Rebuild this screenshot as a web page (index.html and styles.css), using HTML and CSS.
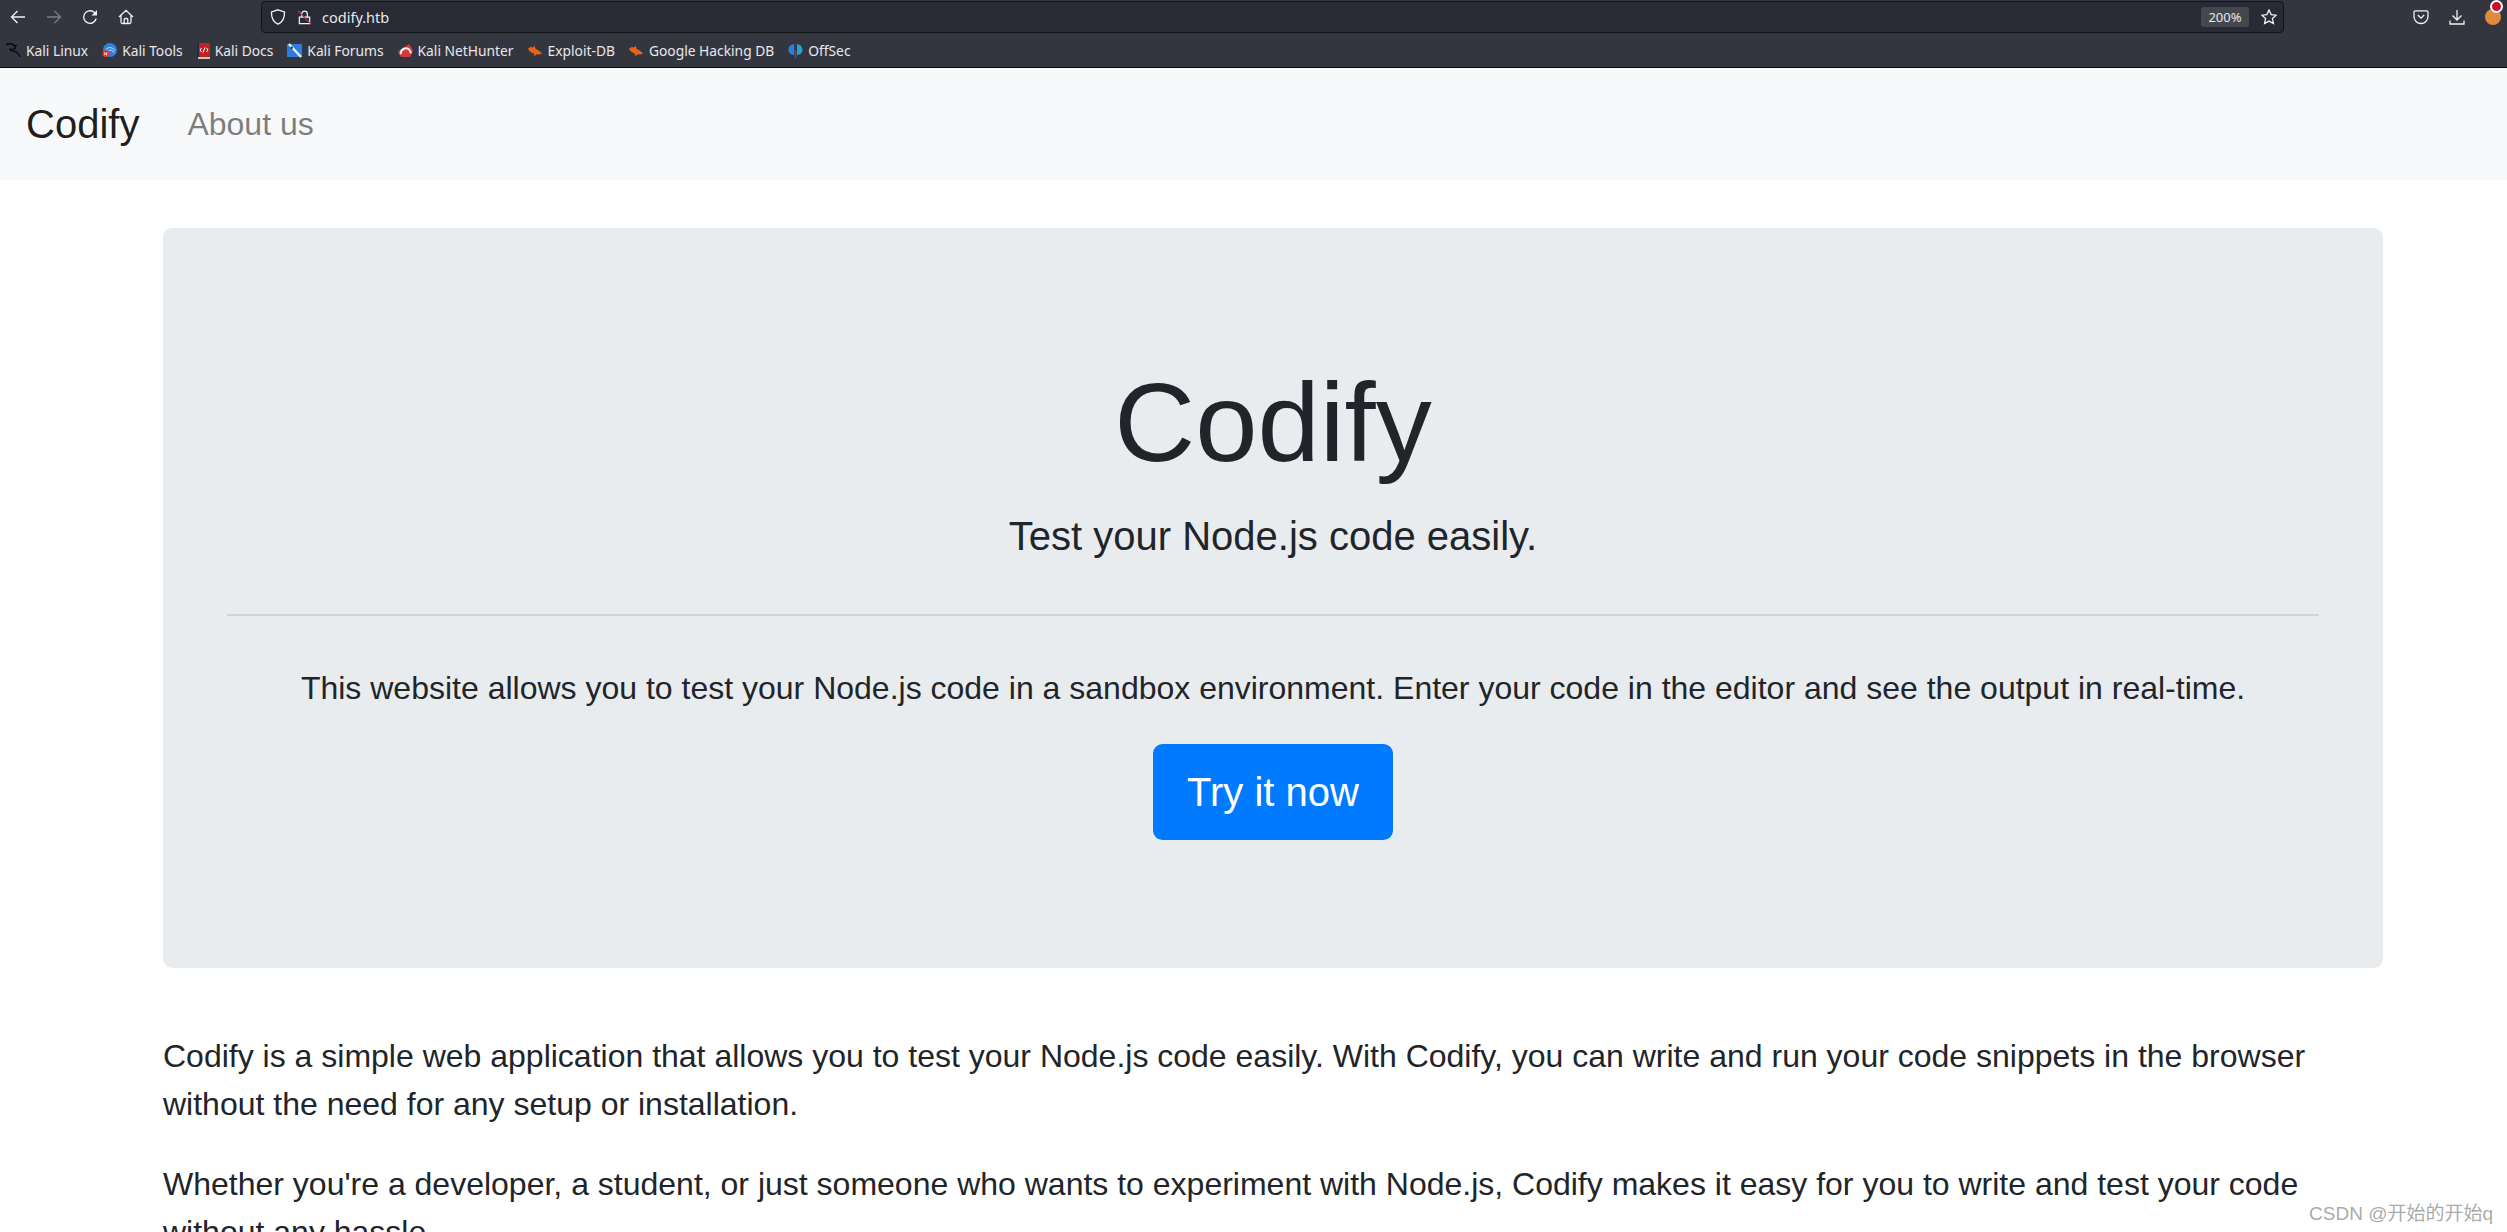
FILE: index.html
```html
<!DOCTYPE html>
<html lang="en">
<head>
    <meta charset="UTF-8">
    <meta name="viewport" content="width=device-width, initial-scale=1.0">
    <title>Codify</title>
    <link rel="stylesheet" href="styles.css">
</head>
<body>
    <!-- Browser toolbar -->
    <div class="browser-bar">
        <div class="toolbar">
            <div class="nav-buttons">
                <svg class="icon" viewBox="0 0 16 16"><path d="M15 8H1.500M7.500 2 1.500 8l6 6"/></svg>
                <svg class="icon icon-dim" viewBox="0 0 16 16"><path d="M1 8h13.500M8.500 2l6 6-6 6"/></svg>
                <svg class="icon" viewBox="0 0 16 16"><path d="M14.200 9.500A6.300 6.300 0 1 1 11.800 3L14 5"/><path class="solid" d="M15 1v5.500H9.500z"/></svg>
                <svg class="icon" viewBox="0 0 16 16"><path d="M1 8 8 1.300 15 8M3 6.500V13q0 1.500 1.500 1.500h7Q13 14.500 13 13V6.500M6.200 14.500V10.500q0-1 1-1h1.600q1 0 1 1v4"/></svg>
            </div>
            <div class="url-bar">
                <svg class="icon icon-shield" viewBox="0 0 16 16"><path d="M8 .8 14.500 3c.3 5.500-1.500 9.800-6.500 12.200C3 12.800 1.200 8.500 1.500 3z"/></svg>
                <svg class="icon icon-lock" viewBox="0 0 16 16"><path d="M2.500 7.500h11v7h-11zM5 7.500V4.300a3 3 0 0 1 6 0v3.200"/><path class="slash" d="M1 1 15 15"/></svg>
                <span class="url-text">codify.htb</span>
                <span class="zoom-level">200%</span>
                <svg class="icon icon-star" viewBox="0 0 16 16"><path d="m8 1 2.100 4.600 5 .6-3.700 3.400 1 4.900L8 12.100l-4.400 2.400 1-4.900L.9 6.200l5-.6z"/></svg>
            </div>
            <div class="toolbar-right">
                <svg class="icon" viewBox="0 0 16 16"><path d="M2.300 1.800h11.400q1.300 0 1.300 1.300v4.400a7 7 0 0 1-14 0V3.100q0-1.300 1.300-1.300zM4.800 6 8 9.200 11.200 6"/></svg>
                <svg class="icon" viewBox="0 0 16 16"><path d="M8 1v10M3.500 6.500 8 11l4.500-4.500M1 11.500V15h14v-3.500"/></svg>
                <div class="addon">
                    <span class="addon-face"></span>
                    <span class="addon-badge"></span>
                </div>
            </div>
        </div>
        <div class="bookmarks">
            <span class="bookmark">
                <svg class="fav" viewBox="0 0 16 16"><path class="fav-line" d="M0 2q6-3 9 1 2 3-1 4-3 0-4-1 1 3 5 3 4 1 6 6M9 3l3-.5"/></svg>
                Kali Linux
            </span>
            <span class="bookmark">
                <svg class="fav" viewBox="0 0 16 16"><circle cx="8.500" cy="7.500" r="7.500" fill="#2f7fe0"/><path d="M4 7q5-5 10 1M7 8q3-2 6 2" fill="none" stroke="#d5e6fa"/><circle cx="4" cy="11.500" r="3.700" fill="#e0322b"/><path d="M3 10v3M5 10v3" stroke="#fff"/></svg>
                Kali Tools
            </span>
            <span class="bookmark bookmark-docs">
                <svg class="fav fav-docs" viewBox="0 0 13 16"><rect x="1" y="0" width="12" height="14" fill="#c4201f"/><rect x="0" y="0" width="2" height="16" fill="#1e2a55"/><rect x="1" y="14" width="12" height="2" fill="#c9c9c9"/><path d="M4.500 5 3 7l1.500 2M9.500 5 11 7 9.500 9M8 4.500 6 9.500" fill="none" stroke="#fff"/></svg>
                Kali Docs
            </span>
            <span class="bookmark">
                <svg class="fav" viewBox="0 0 16 16"><rect x="0" y="1" width="16" height="14" rx="1" fill="#2b7de4"/><path d="M2 1l13 14" stroke="#eee" stroke-width="2.500"/><circle cx="5" cy="5" r="1.300" fill="#333"/></svg>
                Kali Forums
            </span>
            <span class="bookmark">
                <svg class="fav" viewBox="0 0 16 16"><path d="M0 9 12 1l4 7-3 7H3z" fill="#d8383d"/><path d="M3 12a5.500 5.500 0 0 1 9-5l2 4" fill="none" stroke="#eee" stroke-width="2.200"/></svg>
                Kali NetHunter
            </span>
            <span class="bookmark">
                <svg class="fav" viewBox="0 0 16 16"><path d="M0 6q3-3 5-1l2-2 1 3q3 1 7 5-3 2-6 1l-2 2-1-3Q2 10 0 6z" fill="#e8641b"/></svg>
                Exploit-DB
            </span>
            <span class="bookmark">
                <svg class="fav" viewBox="0 0 16 16"><path d="M0 6q3-3 5-1l2-2 1 3q3 1 7 5-3 2-6 1l-2 2-1-3Q2 10 0 6z" fill="#e8641b"/></svg>
                Google Hacking DB
            </span>
            <span class="bookmark">
                <svg class="fav" viewBox="0 0 16 16"><path d="M6.500 1Q0 2 .5 8q.5 4 6 5z" fill="#2a7fd8"/><path d="M9.500 1q6 1 6 7-.5 4-6 5z" fill="#2aa3c8"/><path d="M7.300 8h1.400v8H7.300z" fill="#6a3fd0"/></svg>
                OffSec
            </span>
        </div>
    </div>

    <!-- Site nav -->
    <nav class="navbar">
        <a class="navbar-brand" href="#">Codify</a>
        <a class="nav-link" href="#">About us</a>
    </nav>

    <div class="container">
        <div class="jumbotron">
            <h1 class="jumbo-title">Codify</h1>
            <p class="lead">Test your Node.js code easily.</p>
            <hr class="divider">
            <p class="jumbo-text">This website allows you to test your Node.js code in a sandbox environment. Enter your code in the editor and see the output in real-time.</p>
            <a class="btn-try" href="#">Try it now</a>
        </div>

        <p class="copy">Codify is a simple web application that allows you to test your Node.js code easily. With Codify, you can write and run your code snippets in the browser without the need for any setup or installation.</p>
        <p class="copy">Whether you're a developer, a student, or just someone who wants to experiment with Node.js, Codify makes it easy for you to write and test your code without any hassle.</p>
    </div>

    <div class="watermark">CSDN @开始的开始q</div>
</body>
</html>
```

FILE: styles.css
```css
/* Page */
html, body {
    height: 1232px;
    overflow: hidden;
}

body {
    margin: 0;
    font-family: "Liberation Sans", Arial, sans-serif;
    font-size: 32px;
    line-height: 48px;
    color: #212529;
    background-color: white;
}

a {
    text-decoration: none;
}

/* Browser chrome */
.browser-bar {
    height: 67px;
    background-color: #34363f;
    border-bottom: 1px solid #0c0c0d;
    font-family: "Noto Sans", sans-serif;
    color: #e8e8ea;
}

.toolbar {
    display: flex;
    align-items: center;
    height: 33px;
}

.icon {
    width: 16px;
    height: 16px;
    fill: none;
    stroke: #f2f2f4;
    stroke-width: 1.300;
    flex-shrink: 0;
}

.icon .solid {
    fill: #f2f2f4;
    stroke: none;
}

.icon-dim {
    stroke: #7b7c84;
}

.nav-buttons {
    display: flex;
    gap: 20px;
    width: 261px;
    padding-left: 10px;
    box-sizing: border-box;
}

.url-bar {
    display: flex;
    align-items: center;
    width: 2023px;
    height: 32px;
    box-sizing: border-box;
    margin-top: 1px;
    padding: 0 6px 0 8px;
    background-color: #282a35;
    border: 1px solid #14151a;
    border-radius: 4px;
}

.icon-lock {
    margin-left: 11px;
    width: 15px;
    height: 15px;
}

.slash {
    stroke: #e22850;
}

.url-text {
    margin-left: 10px;
    font-size: 14.500px;
    line-height: 20px;
    flex: 1;
}

.zoom-level {
    width: 48px;
    height: 20px;
    margin-right: 12px;
    border-radius: 3px;
    background-color: #45474f;
    font-size: 13px;
    line-height: 20px;
    text-align: center;
}

.toolbar-right {
    display: flex;
    align-items: center;
    gap: 20px;
    margin-left: 129px;
}

.addon {
    position: relative;
    width: 16px;
    height: 16px;
}

.addon-face {
    display: block;
    width: 16px;
    height: 16px;
    border-radius: 50%;
    background-color: #e08a3c;
}

.addon-badge {
    position: absolute;
    top: -9px;
    left: 5px;
    width: 9px;
    height: 9px;
    border: 2px solid white;
    border-radius: 50%;
    background-color: #c8102e;
}

.bookmarks {
    display: flex;
    align-items: center;
    gap: 14px;
    height: 33px;
    box-sizing: border-box;
    padding: 2px 0 0 6px;
    font-size: 13.800px;
    line-height: 20px;
}

.bookmark {
    display: flex;
    align-items: center;
    gap: 5px;
    white-space: nowrap;
}

.fav {
    width: 15px;
    height: 15px;
}

.fav-docs {
    width: 13px;
    height: 16px;
}

.fav-line {
    fill: none;
    stroke: #0a0a0a;
    stroke-width: 1.500;
}

/* Site nav */
.navbar {
    display: flex;
    align-items: center;
    height: 112px;
    padding: 0 32px 0 26px;
    background-color: #f8f9fa;
}

.navbar-brand {
    margin-right: 48px;
    font-size: 40px;
    line-height: 60px;
    color: rgba(0, 0, 0, 0.9);
}

.nav-link {
    font-size: 32px;
    line-height: 48px;
    color: rgba(0, 0, 0, 0.5);
}

/* Main content */
.container {
    width: 2220px;
    margin: 48px 0 0 163px;
}

.jumbotron {
    display: flex;
    flex-direction: column;
    align-items: center;
    padding: 128px 64px;
    margin-bottom: 64px;
    background-color: #e9ecef;
    border-radius: 9.600px;
}

.jumbo-title {
    margin: 0 0 16px;
    font-size: 112px;
    font-weight: 300;
    line-height: 134px;
}

.lead {
    margin: 0;
    font-size: 40px;
    line-height: 60px;
}

.divider {
    width: 100%;
    margin: 48px 0;
    border: none;
    border-top: 2px solid rgba(0, 0, 0, 0.1);
}

.jumbo-text {
    margin: 0 0 32px;
}

.btn-try {
    padding: 16px 32px;
    border: 2px solid #007bff;
    border-radius: 9.600px;
    background-color: #007bff;
    color: white;
    font-size: 40px;
    line-height: 60px;
}

.copy {
    margin: 0 0 32px;
}

/* CSDN watermark, over the page */
.watermark {
    position: absolute;
    right: 14px;
    bottom: 5px;
    font-family: "Liberation Sans", "Noto Sans CJK SC", sans-serif;
    font-size: 19px;
    line-height: 26px;
    color: rgba(120, 120, 120, 0.65);
}
```
